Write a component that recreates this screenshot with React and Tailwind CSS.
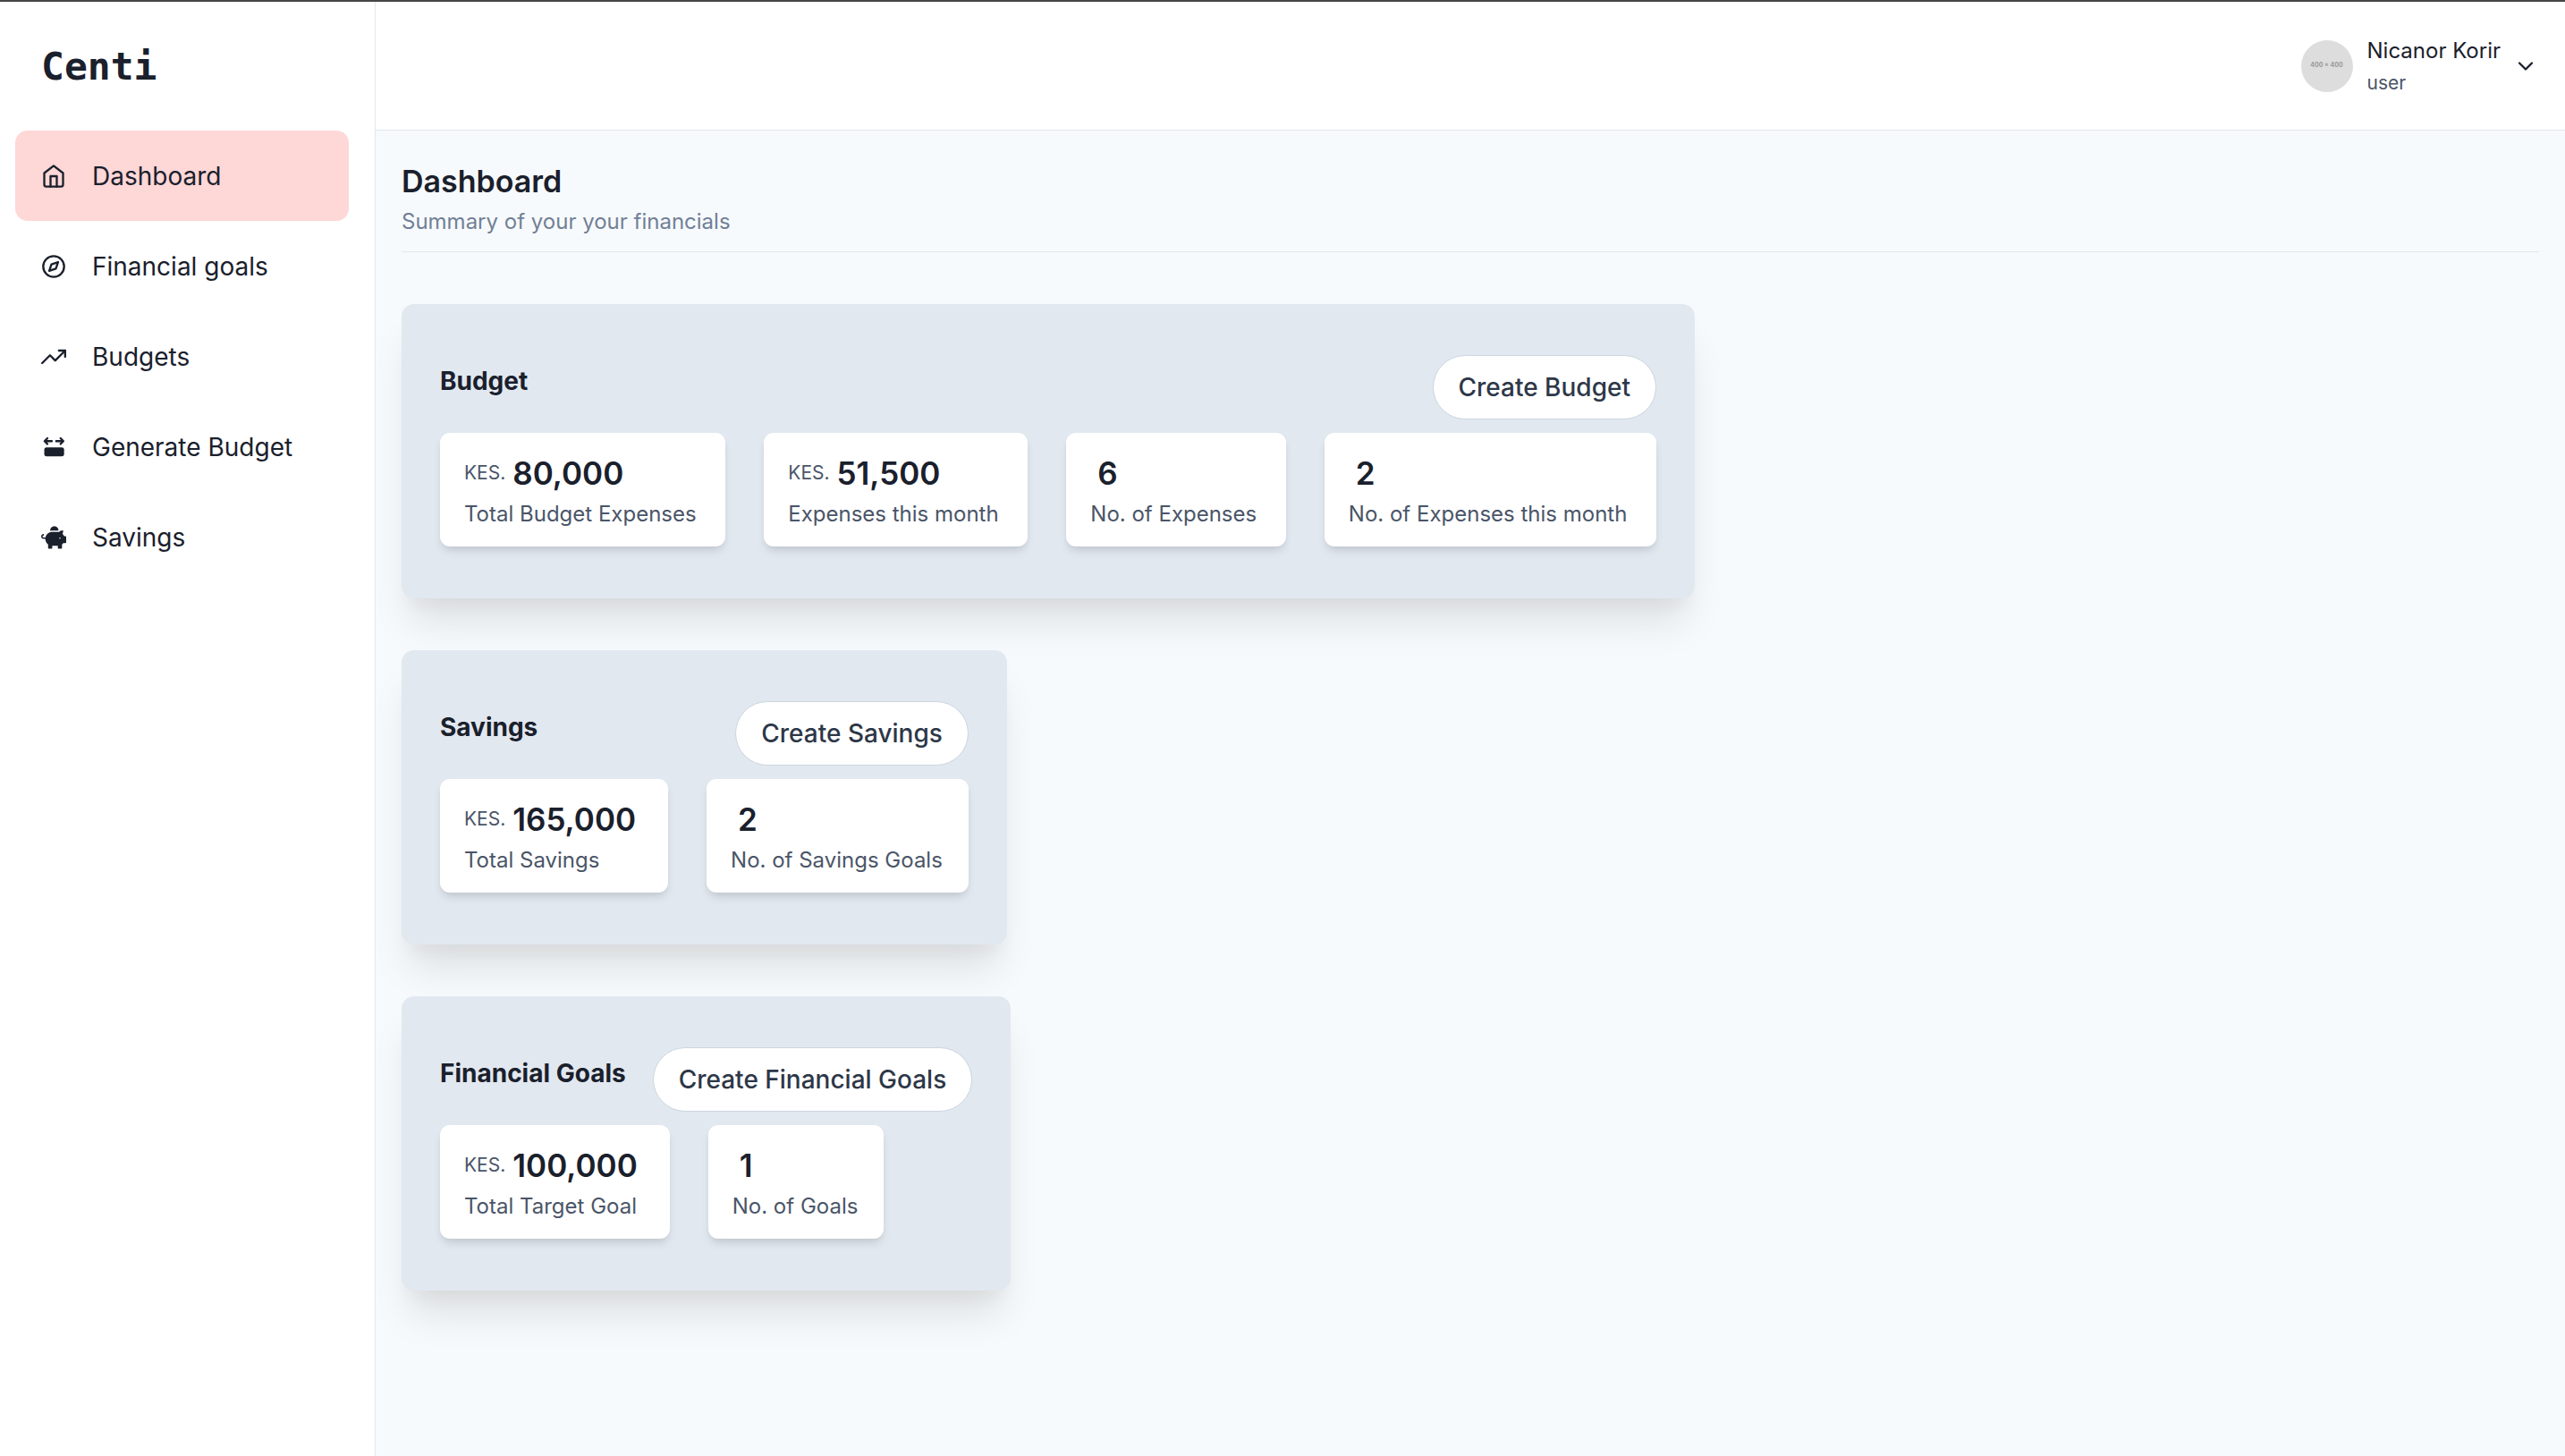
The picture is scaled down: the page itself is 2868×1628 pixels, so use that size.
import React from "react";
import { FiHome, FiCompass, FiTrendingUp, FiChevronDown } from "react-icons/fi";
import { FaPiggyBank } from "react-icons/fa";

function WidthIcon(props) {
  return (
    <svg viewBox="0 0 24 24" fill="none" stroke="currentColor" strokeWidth="2" strokeLinecap="round" strokeLinejoin="round" aria-hidden="true" {...props}>
      <path d="M6 3.4 3.3 6.2 6 9M3.6 6.2H10.2M18.6 3.4l2.7 2.8L18.6 9M21 6.2H14.4" />
      <rect x="3" y="12.2" width="19" height="8.6" rx="2.2" fill="currentColor" stroke="none" />
    </svg>
  );
}

const NAV = [
  { label: "Dashboard", icon: FiHome, active: true },
  { label: "Financial goals", icon: FiCompass },
  { label: "Budgets", icon: FiTrendingUp },
  { label: "Generate Budget", icon: WidthIcon },
  { label: "Savings", icon: FaPiggyBank },
];

const SECTIONS = [
  {
    title: "Budget",
    action: "Create Budget",
    wide: true,
    stats: [
      { unit: "KES.", value: "80,000", label: "Total Budget Expenses" },
      { unit: "KES.", value: "51,500", label: "Expenses this month" },
      { value: "6", label: "No. of Expenses" },
      { value: "2", label: "No. of Expenses this month" },
    ],
  },
  {
    title: "Savings",
    action: "Create Savings",
    stats: [
      { unit: "KES.", value: "165,000", label: "Total Savings" },
      { value: "2", label: "No. of Savings Goals" },
    ],
  },
  {
    title: "Financial Goals",
    action: "Create Financial Goals",
    stats: [
      { unit: "KES.", value: "100,000", label: "Total Target Goal" },
      { value: "1", label: "No. of Goals" },
    ],
  },
];

function Stat({ unit, value, label }) {
  return (
    <div className="rounded-[11px] bg-white pt-6 pr-[29px] pb-3 pl-[27px] shadow-[0_7px_11px_-2px_rgba(0,0,0,0.1),0_4px_7px_-2px_rgba(0,0,0,0.06)]">
      <div className="flex items-center leading-[42px]">
        {unit && <span className="text-[21px] text-[#4A5568]">{unit}</span>}
        <span className="mr-[7px] ml-2 text-[35px] font-semibold">{value}</span>
      </div>
      <div className="text-[24px] leading-[49px] whitespace-nowrap text-[#4A5568]">{label}</div>
    </div>
  );
}

function Section({ title, action, stats, wide }) {
  return (
    <section className="w-fit rounded-[14px] bg-[#E2E8F0] px-[43px] pt-[57px] pb-[58px] shadow-[0_35px_44px_-9px_rgba(0,0,0,0.1),0_18px_18px_-9px_rgba(0,0,0,0.04)]">
      <div className="mb-[15px] flex items-start justify-between gap-[30px]">
        <h2 className="py-2 text-[28px] leading-[42px] font-bold">{title}</h2>
        <button type="button" className="h-[72px] rounded-full border border-[#CBD5E0] bg-white px-7 text-[28px] font-medium whitespace-nowrap text-[#2D3748]">
          {action}
        </button>
      </div>
      <div className={wide ? "flex gap-[43px] xl:min-w-[1360px] *:grow" : "flex gap-[43px]"}>
        {stats.map((s) => (
          <Stat key={s.label} {...s} />
        ))}
      </div>
    </section>
  );
}

export default function App() {
  return (
    <div className="flex min-h-screen border-t-2 border-[#464444] bg-[#F7FAFC] font-['Inter',sans-serif] text-[#1A202C]">
      <aside className="w-[420px] shrink-0 border-r border-[#E2E8F0] bg-white">
        <div className="flex h-36 items-center px-[46px] font-['DejaVu_Sans_Mono',monospace] text-[43px] font-bold">Centi</div>
        <nav className="pr-[29px] pl-[17px]">
          {NAV.map(({ label, icon: Icon, active }) => (
            <a
              key={label}
              href="#"
              aria-current={active ? "page" : undefined}
              className={
                active
                  ? "flex h-[101px] items-center gap-[29px] rounded-[14px] bg-[#FED7D7] px-[29px] text-[28px]"
                  : "flex h-[101px] items-center gap-[29px] rounded-[14px] px-[29px] text-[28px]"
              }
            >
              <Icon className="size-7 shrink-0" />
              {label}
            </a>
          ))}
        </nav>
      </aside>

      <div className="min-w-0 flex-1">
        <header className="flex h-36 items-center justify-end border-b border-[#E2E8F0] bg-white px-[30px]">
          <button type="button" className="flex items-center text-left">
            <span className="flex size-[58px] items-center justify-center rounded-full bg-[#DDDDDD] text-[7px] font-bold text-[#999999]">400 × 400</span>
            <span className="ml-4 flex flex-col pt-[3px]">
              <span className="text-[24px] leading-[35px]">Nicanor Korir</span>
              <span className="text-[21px] leading-[37px] text-[#4A5568]">user</span>
            </span>
            <FiChevronDown className="ml-[14px] size-7" />
          </button>
        </header>

        <main className="px-[29px] pt-8 pb-14">
          <div className="border-b border-[#E2E8F0] pb-3">
            <h1 className="text-[34px] leading-[49px] font-semibold">Dashboard</h1>
            <p className="text-[24px] leading-[42px] text-[#718096]">Summary of your your financials</p>
          </div>
          <div className="mt-[58px] flex flex-col items-start gap-[58px]">
            {SECTIONS.map((s) => (
              <Section key={s.title} {...s} />
            ))}
          </div>
        </main>
      </div>
    </div>
  );
}
